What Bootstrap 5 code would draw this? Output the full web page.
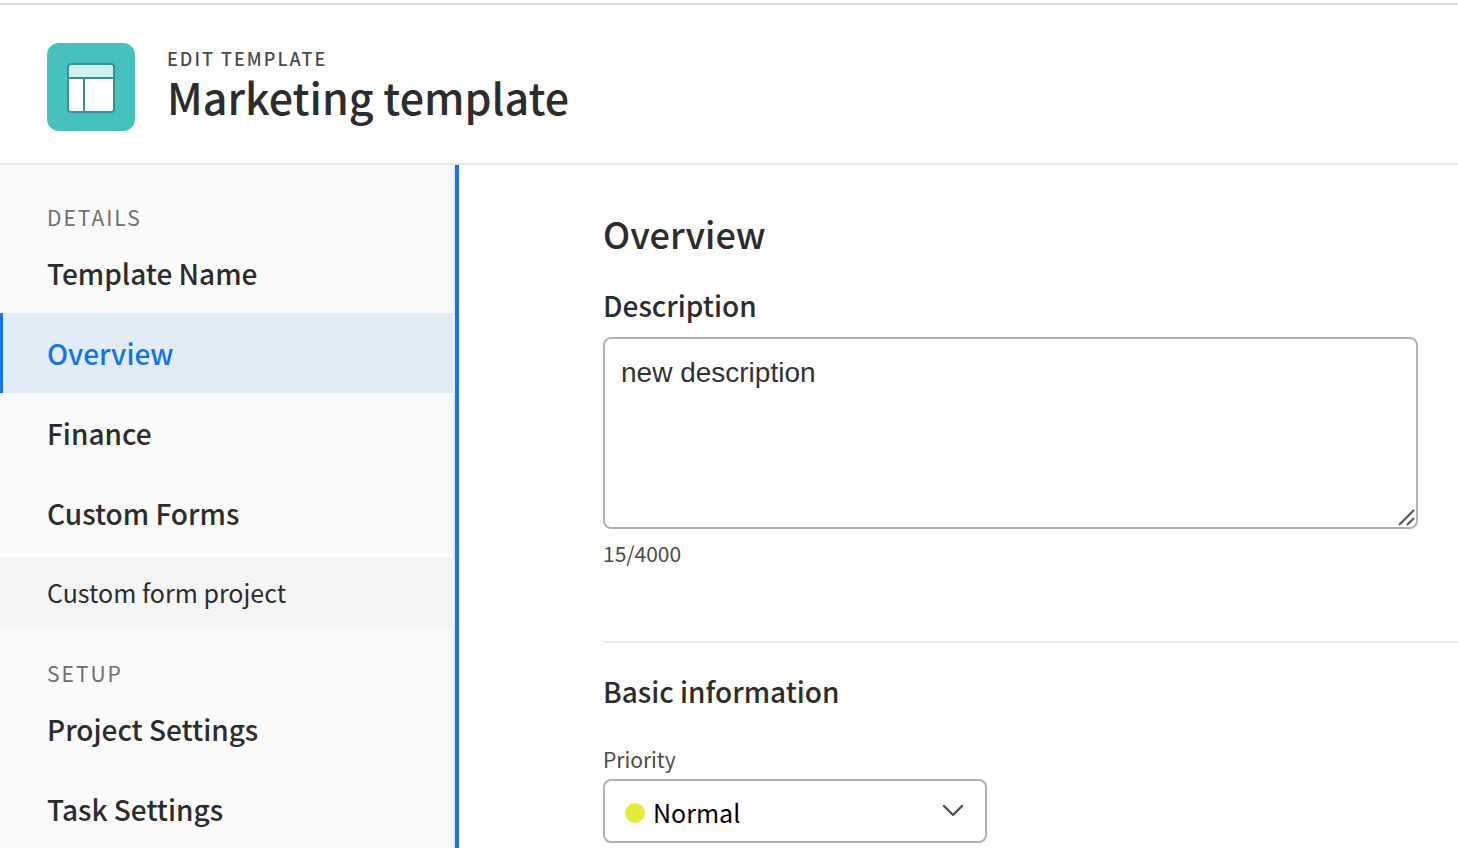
<!DOCTYPE html>
<html lang="en">
<head>
<meta charset="utf-8">
<meta name="viewport" content="width=device-width, initial-scale=1">
<title>Edit template</title>
<link href="https://cdn.jsdelivr.net/npm/bootstrap@5.3.0/dist/css/bootstrap.min.css" rel="stylesheet">
<style>
  body { font-family: "Noto Sans CJK SC", "Noto Sans", sans-serif; color: #2c2c2c; }
  .app-header { border-top: 2px solid #dcdcdc; border-bottom: 2px solid #e8e8e8; margin-top: 3px; padding: 38px 47px 32px; gap: 32px; }
  .app-icon { width: 88px; height: 88px; }
  .titles { padding-bottom: 6px; }
  .eyebrow { font-size: 18px; line-height: 24px; letter-spacing: 2px; font-weight: 500; color: #4b4b4b; }
  .app-title { font-size: 43px; line-height: 52px; font-weight: 500; }
  .side { width: 459px; background: #fafafa; border-right: 4px solid #1473e6; }
  .side-inner { border-right: 2px solid #eaeaea; padding-top: 8px; }
  .side-heading { font-size: 21px; line-height: 30px; letter-spacing: 2px; font-weight: 400; color: #6e6e6e; padding: 29px 47px 1px; }
  .side .nav-link { font-size: 28px; line-height: 40px; font-weight: 500; color: #2c2c2c; padding: 20px 47px; border-radius: 0; }
  .side .nav-link.active { background: #e2ecf6; color: #1473e6; box-shadow: inset 3px 0 #1473e6; }
  .side .nav-link.sub-link { font-size: 25px; font-weight: 400; background: #f4f4f4; border-top: 4px solid #fff; padding: 15px 47px 17px; }
  .content { padding: 44px 0 0 144px; }
  .content h2 { font-size: 36px; line-height: 48px; font-weight: 500; margin-bottom: 28px; }
  .group-title { font-size: 28px; line-height: 40px; font-weight: 500; margin-bottom: 12px; }
  .field-box { border: 2px solid #b1b1b1; border-radius: 8px; }
  .desc { height: 192px; padding: 16px; font: 28px/36px "Liberation Sans", Arial, sans-serif; color: #323232; resize: vertical;
    background: #fff url("data:image/svg+xml,%3Csvg xmlns='http://www.w3.org/2000/svg' width='18' height='18'%3E%3Cpath d='M2 16L17 1M10 16L17 9' stroke='%23555' stroke-width='2'/%3E%3C/svg%3E") no-repeat right 1px bottom 0; }
  .desc::-webkit-resizer { background: transparent; }
  .hint { font-size: 21px; line-height: 32px; color: #4b4b4b; }
  .rule { border-top: 2px solid #e8e8e8; margin-top: 72px; padding-top: 28px; }
  .rule .group-title { margin-bottom: 32px; }
  .priority { width: 384px; height: 64px; font-size: 25px; line-height: 40px; color: #000; padding: 11px 60px 9px 48px;
    background: #fff url("data:image/svg+xml,%3Csvg xmlns='http://www.w3.org/2000/svg' width='24' height='16'%3E%3Cpath d='M3 3L12 12L21 3' fill='none' stroke='%23464f5b' stroke-width='2.4' stroke-linecap='round' stroke-linejoin='round'/%3E%3C/svg%3E") no-repeat right 20px top 22px; background-size: 24px 16px; }
  .dot { width: 20px; height: 20px; left: 22px; top: 24px; background: #e3eb3a; pointer-events: none; }
</style>
</head>
<body>
<div class="d-flex flex-column vh-100 overflow-hidden">
  <header class="app-header d-flex align-items-center flex-shrink-0">
    <svg class="app-icon flex-shrink-0" viewBox="0 0 88 88" aria-hidden="true">
      <rect width="88" height="88" rx="12" fill="#47c1bf"/>
      <rect x="21" y="21" width="46" height="48" rx="3" fill="#fff"/>
      <path d="M21 35V24a3 3 0 0 1 3-3h40a3 3 0 0 1 3 3v11z" fill="#cff1f0"/>
      <rect x="21" y="21" width="46" height="48" rx="3" fill="none" stroke="#38908f" stroke-width="2"/>
      <path d="M21 35h46M37 35v34" stroke="#38908f" stroke-width="2"/>
    </svg>
    <div class="titles">
      <div class="eyebrow">EDIT TEMPLATE</div>
      <h1 class="app-title mb-0">Marketing template</h1>
    </div>
  </header>
  <div class="d-flex flex-grow-1 overflow-hidden">
    <nav class="side flex-shrink-0" aria-label="Template sections">
      <div class="side-inner">
        <h2 class="side-heading mb-0">DETAILS</h2>
        <div class="nav flex-column">
          <a class="nav-link" href="#name">Template Name</a>
          <a class="nav-link active" href="#overview" aria-current="true">Overview</a>
          <a class="nav-link" href="#finance">Finance</a>
          <a class="nav-link" href="#forms">Custom Forms</a>
          <a class="nav-link sub-link" href="#form-project">Custom form project</a>
        </div>
        <h2 class="side-heading mb-0">SETUP</h2>
        <div class="nav flex-column">
          <a class="nav-link" href="#project">Project Settings</a>
          <a class="nav-link" href="#task">Task Settings</a>
        </div>
      </div>
    </nav>
    <main class="content flex-grow-1" id="overview">
      <h2>Overview</h2>
      <label class="group-title d-block" for="desc">Description</label>
      <div class="pe-4 me-3">
        <textarea class="desc field-box form-control" id="desc" maxlength="4000">new description</textarea>
        <div class="hint mt-2">15/4000</div>
      </div>
      <section class="rule">
        <h3 class="group-title">Basic information</h3>
        <label class="hint d-block mb-1" for="priority">Priority</label>
        <div class="position-relative d-inline-block">
          <select class="priority field-box form-select" id="priority">
            <option>Normal</option>
          </select>
          <span class="dot position-absolute rounded-circle"></span>
        </div>
      </section>
    </main>
  </div>
</div>
<script src="https://cdn.jsdelivr.net/npm/bootstrap@5.3.0/dist/js/bootstrap.bundle.min.js"></script>
</body>
</html>
